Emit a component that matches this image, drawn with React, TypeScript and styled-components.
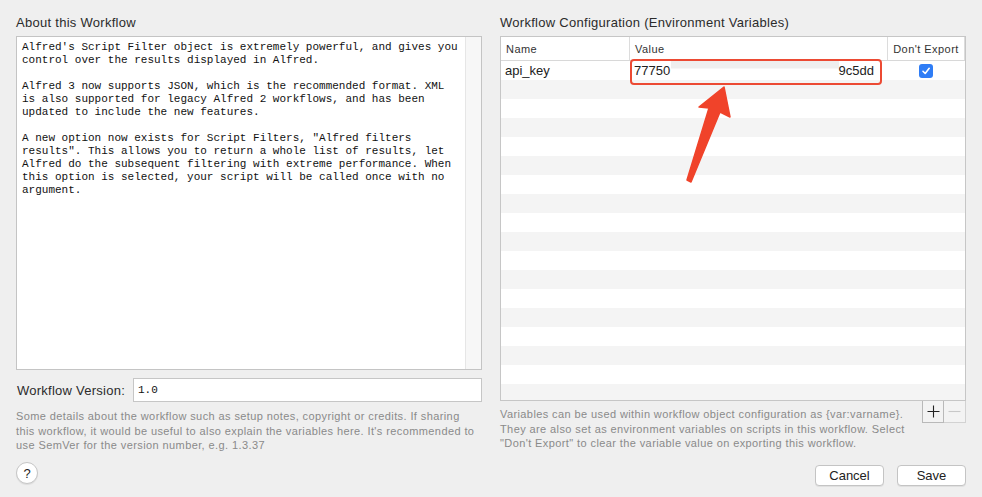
import React from 'react';
import styled, { createGlobalStyle } from 'styled-components';

const Global = createGlobalStyle`
  html, body { margin: 0; padding: 0; background: #efefef; }
  body { font-family: "Liberation Sans", Arial, sans-serif; color: #2a2a2a; }
  * { box-sizing: border-box; }
`;

const Page = styled.div`
  width: 982px;
  height: 497px;
  overflow: hidden;
  padding: 14px 16px 0;
  display: grid;
  grid-template-columns: 466px 466px;
  grid-template-rows: 448px 24px;
  column-gap: 18px;
`;

const Column = styled.div`
  display: flex;
  flex-direction: column;
  min-width: 0;
`;

const Title = styled.div`
  font-size: 13px;
  line-height: 16px;
  height: 16px;
  margin-bottom: 6px;
  color: #2b2b2b;
  letter-spacing: 0.28px;
  white-space: nowrap;
  padding-top: 1px;
`;

const TextBox = styled.div`
  height: 334px;
  background: #fff;
  border: 1px solid #c4c4c4;
  display: flex;
`;

const TextContent = styled.div`
  flex: 1;
  padding: 4px 5px;
  font-family: "Liberation Mono", "DejaVu Sans Mono", monospace;
  font-size: 11px;
  line-height: 13px;
  color: #111;
  white-space: pre;
  overflow: hidden;
`;

const ScrollTrack = styled.div`
  width: 16px;
  background: #f7f7f7;
  border-left: 1px solid #e6e6e6;
`;

const VersionRow = styled.div`
  margin-top: 8px;
  display: flex;
  align-items: center;
  gap: 9px;
  padding-left: 1px;
`;

const Label = styled.label`
  font-size: 13px;
  color: #2b2b2b;
  letter-spacing: 0.25px;
  white-space: nowrap;
  width: 107px;
`;

const TextInput = styled.div`
  flex: 1;
  height: 24px;
  background: #fff;
  border: 1px solid #c6c6c6;
  padding: 0 4px;
  display: flex;
  align-items: center;
  font-family: "Liberation Mono", "DejaVu Sans Mono", monospace;
  font-size: 11px;
  color: #111;
`;

const Note = styled.div<{ $mt: number }>`
  margin-top: ${p => p.$mt}px;
  font-size: 11px;
  line-height: 14.5px;
  letter-spacing: 0.4px;
  color: #8a8a8a;
  white-space: pre;
`;

const Table = styled.div`
  position: relative;
  height: 365px;
  background: #fff;
  border: 1px solid #c6c6c6;
  overflow: hidden;
`;

const Grid = styled.div`
  display: grid;
  grid-template-columns: 128px 258px 78px;
`;

const HeaderRow = styled(Grid)`
  height: 24px;
  border-bottom: 1px solid #d8d8d8;
`;

const HeadCell = styled.div<{ $sep?: boolean; $center?: boolean; $end?: boolean }>`
  font-size: 11px;
  color: #333;
  letter-spacing: 0.45px;
  display: flex;
  align-items: center;
  justify-content: ${p => (p.$center ? 'center' : 'flex-start')};
  padding-left: ${p => (p.$center ? 0 : 5)}px;
  border-left: ${p => (p.$sep ? '1px solid #dcdcdc' : 'none')};
  border-right: ${p => (p.$end ? '1px solid #dcdcdc' : 'none')};
  white-space: nowrap;
`;

const Row = styled(Grid)<{ $stripe: boolean }>`
  height: 19px;
  background: ${p => (p.$stripe ? '#f4f4f4' : '#fff')};
`;

const Cell = styled.div<{ $center?: boolean }>`
  font-size: 13px;
  color: #222;
  display: flex;
  align-items: center;
  justify-content: ${p => (p.$center ? 'center' : 'flex-start')};
  padding-left: ${p => (p.$center ? 0 : 4)}px;
  white-space: nowrap;
`;

const ValueField = styled.div`
  display: flex;
  align-items: center;
  justify-content: space-between;
  width: 248px;
  margin-left: -2px;
  padding: 0 5px 0 3px;
  font-size: 13px;
  color: #222;
  background: #fff;
  height: 19px;
`;

const Blur = styled.span`
  flex: 1;
  align-self: stretch;
  margin-left: 1px;
  background: linear-gradient(#efefef 0, #efefef 7px, #fff 8px);
`;

const Check = styled.div`
  width: 14px;
  height: 14px;
  border-radius: 3px;
  background: #2f7df6;
  display: flex;
  align-items: center;
  justify-content: center;
`;

const Highlight = styled.div`
  position: absolute;
  left: 129px;
  top: 22px;
  width: 252px;
  height: 26px;
  border: 2.5px solid #ec4a33;
  border-radius: 4px;
  pointer-events: none;
`;

const Overlay = styled.svg`
  position: absolute;
  left: 0;
  top: 0;
  width: 100%;
  height: 100%;
  pointer-events: none;
`;

const BelowTable = styled.div`
  display: flex;
  justify-content: space-between;
  align-items: flex-start;
`;

const Segmented = styled.div`
  display: flex;
`;

const SegButton = styled.div<{ $disabled?: boolean }>`
  width: 22px;
  height: 22px;
  display: flex;
  align-items: center;
  justify-content: center;
  border: 1px solid ${p => (p.$disabled ? '#d2d2d2' : '#b9b9b9')};
  border-top: none;
  border-left: ${p => (p.$disabled ? 'none' : '1px solid #b9b9b9')};
  background: #f3f3f3;
`;

const Footer = styled.div`
  grid-column: 1 / -1;
  display: flex;
  justify-content: space-between;
  align-items: flex-start;
`;

const HelpButton = styled.div`
  width: 22px;
  height: 22px;
  border-radius: 50%;
  background: #fff;
  border: 1px solid #c6c6c6;
  box-shadow: 0 1px 1px rgba(0, 0, 0, 0.08);
  display: flex;
  align-items: center;
  justify-content: center;
  font-size: 13px;
  color: #222;
`;

const Buttons = styled.div`
  display: flex;
  gap: 13px;
  margin-top: 3px;
`;

const PushButton = styled.div`
  width: 69px;
  height: 21px;
  background: #fff;
  border: 1px solid #c4c4c4;
  border-radius: 4px;
  box-shadow: 0 1px 0 rgba(0, 0, 0, 0.06);
  display: flex;
  align-items: center;
  justify-content: center;
  font-size: 13px;
  color: #222;
`;

const aboutText = `Alfred's Script Filter object is extremely powerful, and gives you
control over the results displayed in Alfred.

Alfred 3 now supports JSON, which is the recommended format. XML
is also supported for legacy Alfred 2 workflows, and has been
updated to include the new features.

A new option now exists for Script Filters, "Alfred filters
results". This allows you to return a whole list of results, let
Alfred do the subsequent filtering with extreme performance. When
this option is selected, your script will be called once with no
argument.`;

const leftNote = `Some details about the workflow such as setup notes, copyright or credits. If sharing
this workflow, it would be useful to also explain the variables here. It's recommended to
use SemVer for the version number, e.g. 1.3.37`;

const rightNote = `Variables can be used within workflow object configuration as {var:varname}.
They are also set as environment variables on scripts in this workflow. Select
"Don't Export" to clear the variable value on exporting this workflow.`;

export default function App() {
  const emptyRows = Array.from({ length: 17 }, (_, i) => i + 1);
  return (
    <>
      <Global />
      <Page>
        <Column>
          <Title>About this Workflow</Title>
          <TextBox>
            <TextContent>{aboutText}</TextContent>
            <ScrollTrack />
          </TextBox>
          <VersionRow>
            <Label>Workflow Version:</Label>
            <TextInput>1.0</TextInput>
          </VersionRow>
          <Note $mt={7}>{leftNote}</Note>
        </Column>
        <Column>
          <Title>Workflow Configuration (Environment Variables)</Title>
          <Table>
            <HeaderRow>
              <HeadCell>Name</HeadCell>
              <HeadCell $sep>Value</HeadCell>
              <HeadCell $sep $center $end>Don't Export</HeadCell>
            </HeaderRow>
            <Row $stripe={false}>
              <Cell>api_key</Cell>
              <Cell>
                <ValueField>
                  <span>77750</span>
                  <Blur />
                  <span>9c5dd</span>
                </ValueField>
              </Cell>
              <Cell $center>
                <Check>
                  <svg width="10" height="10" viewBox="0 0 10 10">
                    <path d="M2 5.3 L4.2 7.5 L8.2 2.3" fill="none" stroke="#fff" strokeWidth="1.6" strokeLinecap="round" strokeLinejoin="round" />
                  </svg>
                </Check>
              </Cell>
            </Row>
            {emptyRows.map(i => (
              <Row key={i} $stripe={i % 2 === 1}>
                <Cell />
                <Cell />
                <Cell />
              </Row>
            ))}
            <Highlight />
            <Overlay viewBox="0 0 464 363">
              <polygon
                points="223,50 229,80 219,75 190,145 186,143 208,71 198,70"
                fill="#f0432a"
                stroke="#f0432a"
                strokeWidth="1.5"
                strokeLinejoin="round"
              />
            </Overlay>
          </Table>
          <BelowTable>
            <Note $mt={6}>{rightNote}</Note>
            <Segmented>
              <SegButton>
                <svg width="13" height="13" viewBox="0 0 13 13">
                  <path d="M6.5 0.5 V12.5 M0.5 6.5 H12.5" stroke="#222" strokeWidth="1.1" />
                </svg>
              </SegButton>
              <SegButton $disabled>
                <svg width="13" height="13" viewBox="0 0 13 13">
                  <path d="M0.5 6.5 H12.5" stroke="#c8c8c8" strokeWidth="1.1" />
                </svg>
              </SegButton>
            </Segmented>
          </BelowTable>
        </Column>
        <Footer>
          <HelpButton>?</HelpButton>
          <Buttons>
            <PushButton>Cancel</PushButton>
            <PushButton>Save</PushButton>
          </Buttons>
        </Footer>
      </Page>
    </>
  );
}
